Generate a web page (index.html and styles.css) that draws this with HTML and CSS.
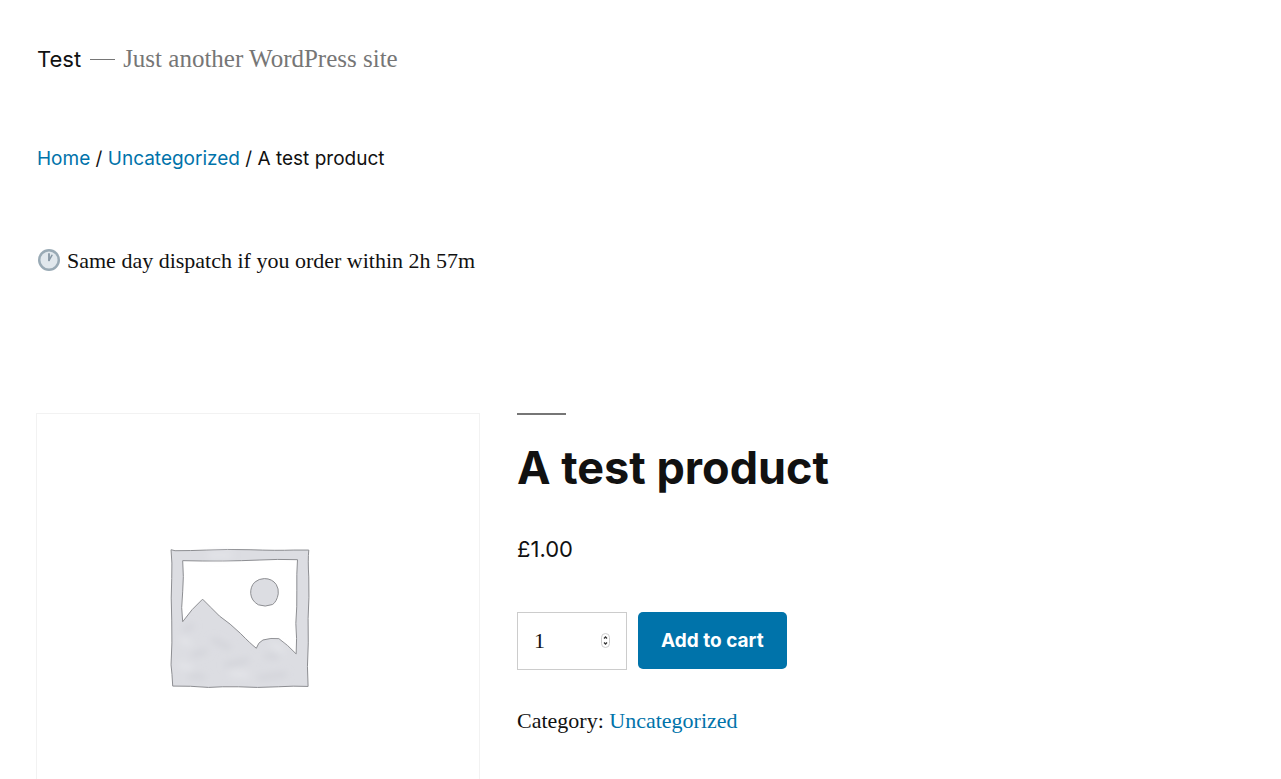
FILE: index.html
```html
<!DOCTYPE html>
<html lang="en">
<head>
<meta charset="utf-8">
<meta name="viewport" content="width=device-width, initial-scale=1">
<title>A test product</title>
<link rel="stylesheet" href="styles.css">
</head>
<body>
<header class="site-header">
  <a class="site-title" href="#">Test</a>
  <span class="site-dash"></span>
  <span class="site-tagline">Just another WordPress site</span>
</header>
<nav class="breadcrumb" aria-label="Breadcrumb"><a href="#">Home</a> / <a href="#">Uncategorized</a> / A test product</nav>
<p class="notice">
  <svg class="clock" viewBox="0 0 36 36" aria-hidden="true">
    <circle cx="18" cy="18" r="18" fill="#99aab5"/>
    <circle cx="18" cy="18" r="14" fill="#e1e8ed"/>
    <path d="M18 20a1.500 1.500 0 0 1-1.500-1.500V8a1.500 1.500 0 0 1 3 0v10.500a1.500 1.500 0 0 1-1.500 1.500z" fill="#8899a6"/>
    <path d="M18 20a1.300 1.300 0 0 1-1.100-2l5-8.500a1.300 1.300 0 0 1 2.200 1.300l-5 8.500a1.300 1.300 0 0 1-1.100.7z" fill="#8899a6"/>
  </svg>
  <span>Same day dispatch if you order within 2h 57m</span>
</p>
<main class="product">
  <div class="gallery">
    <svg class="placeholder" viewBox="-372 -381 1332 1332" role="img" aria-label="Awaiting product image">
      <defs>
        <filter id="wash" x="-20%" y="-20%" width="140%" height="140%"><feGaussianBlur stdDeviation="11"/></filter>
      </defs>
      <path fill="#dcdde2" fill-rule="evenodd" stroke="#8c8d91" stroke-width="3" stroke-linejoin="round" d="M32 28 L44 31 Q90 31 140 29 Q200 26 270 28 Q350 31 402 29 L447 29 Q444 60 447 110 Q449 170 445 235 Q447 310 443 380 L445 440 Q400 438 355 441 Q290 445 235 441 Q185 440 145 443 Q90 438 37 439 Q35 400 32 375 Q36 310 34 240 Q31 170 34 115 Q36 65 32 28 Z M67 61 Q71 110 67 155 Q61 205 67 245 Q94 206 127 177 Q151 201 178 228 Q210 250 242 281 Q270 310 289 325 Q294 307 309 300 Q333 293 357 296 Q384 315 409 342 Q412 295 408 250 Q412 200 411 150 Q410 100 413 58 Q350 56 300 59 Q190 64 67 61 Z"/>
      <path fill="#dcdde2" stroke="#8c8d91" stroke-width="3" d="M313 115 Q337 115 349 133 Q357 146 355 161 Q351 184 338 193 Q315 202 295 194 Q274 182 272 160 Q271 139 284 126 Q297 115 313 115 Z"/>
      <g fill="none" stroke-width="15" stroke-linecap="round" filter="url(#wash)">
        <path stroke="#d2d3d9" d="M75 268 L95 258 M160 300 L205 322 M100 345 L135 335 M200 375 L260 362 M320 348 L350 350 M90 408 L130 412 M300 414 L375 404"/>
        <path stroke="#e5e6ea" d="M60 375 L90 385 M215 400 L260 405 M340 315 L365 330 M65 300 L85 310 M150 45 L210 45"/>
      </g>
    </svg>
  </div>
  <section class="summary">
    <h1 class="product-title">A test product</h1>
    <p class="price">£1.00</p>
    <form class="cart">
      <div class="quantity">
        <input class="qty" type="number" value="1" min="1" aria-label="Product quantity">
        <svg class="stepper" viewBox="0 0 9 15" aria-hidden="true">
          <rect x=".5" y=".5" width="8" height="14" rx="4" fill="#fff" stroke="#ccc"/>
          <path d="M3 5.500 4.500 4 6 5.500M3 9.500 4.500 11 6 9.500" fill="none" stroke="#333" stroke-width="1.300"/>
        </svg>
      </div>
      <button class="add-to-cart" type="button">Add to cart</button>
    </form>
    <p class="meta">Category: <a href="#">Uncategorized</a></p>
  </section>
</main>
</body>
</html>
```
FILE: styles.css
```css
* {
  box-sizing: border-box;
}

html {
  scrollbar-width: none;
}

body {
  margin: 0;
  padding: 43px 36px 0;
  background: #fff;
  color: #111;
  font-family: "Liberation Serif", "Times New Roman", serif;
  font-size: 22px;
  line-height: 32px;
}

a {
  color: #0073aa;
  text-decoration: none;
}

h1,
p {
  margin: 0;
}

.site-header,
.breadcrumb,
.notice {
  padding-left: 1px;
}

.site-header {
  display: flex;
  align-items: center;
  font-size: 25px;
}

.site-header .site-title {
  color: #111;
  font-family: Inter, sans-serif;
  font-size: 22px;
}

.site-dash {
  width: 25px;
  height: 1px;
  margin: 0 8px 0 9px;
  background: #767676;
}

.site-tagline {
  color: #767676;
}

.breadcrumb {
  margin-top: 68px;
  font-family: Inter, sans-serif;
  font-size: 19px;
}

.notice {
  display: flex;
  align-items: center;
  gap: 7px;
  margin-top: 70px;
}

.clock {
  width: 22px;
  height: 22px;
  margin: 0 0 2px 1px;
}

.product {
  display: grid;
  grid-template-columns: 444fr 728fr;
  column-gap: 37px;
  align-items: start;
  margin-top: 136px;
}

.gallery {
  border: 1px solid #f2f2f2;
}

.placeholder {
  display: block;
  width: 100%;
}

.product-title {
  font-family: Inter, sans-serif;
  font-size: 45px;
  font-weight: 700;
  line-height: 56px;
}

.product-title::before {
  display: block;
  width: 49px;
  height: 2px;
  margin-bottom: 25px;
  background: #767676;
  content: "";
}

.price {
  margin-top: 37px;
  font-family: Inter, sans-serif;
}

.cart {
  display: flex;
  gap: 11px;
  margin-top: 47px;
}

.quantity {
  position: relative;
}

.qty {
  width: 110px;
  height: 58px;
  padding: 0 16px;
  border: 1px solid #ccc;
  border-radius: 0;
  background: #fff;
  color: #111;
  font: inherit;
  appearance: textfield;
}

.stepper {
  position: absolute;
  top: 21px;
  right: 17px;
  width: 9px;
  height: 15px;
  pointer-events: none;
}

.add-to-cart {
  align-self: flex-start;
  height: 57px;
  padding: 0 23px;
  border: 0;
  border-radius: 5px;
  background: #0073aa;
  color: #fff;
  font: 700 19px Inter, sans-serif;
}

.meta {
  margin-top: 35px;
}
```
